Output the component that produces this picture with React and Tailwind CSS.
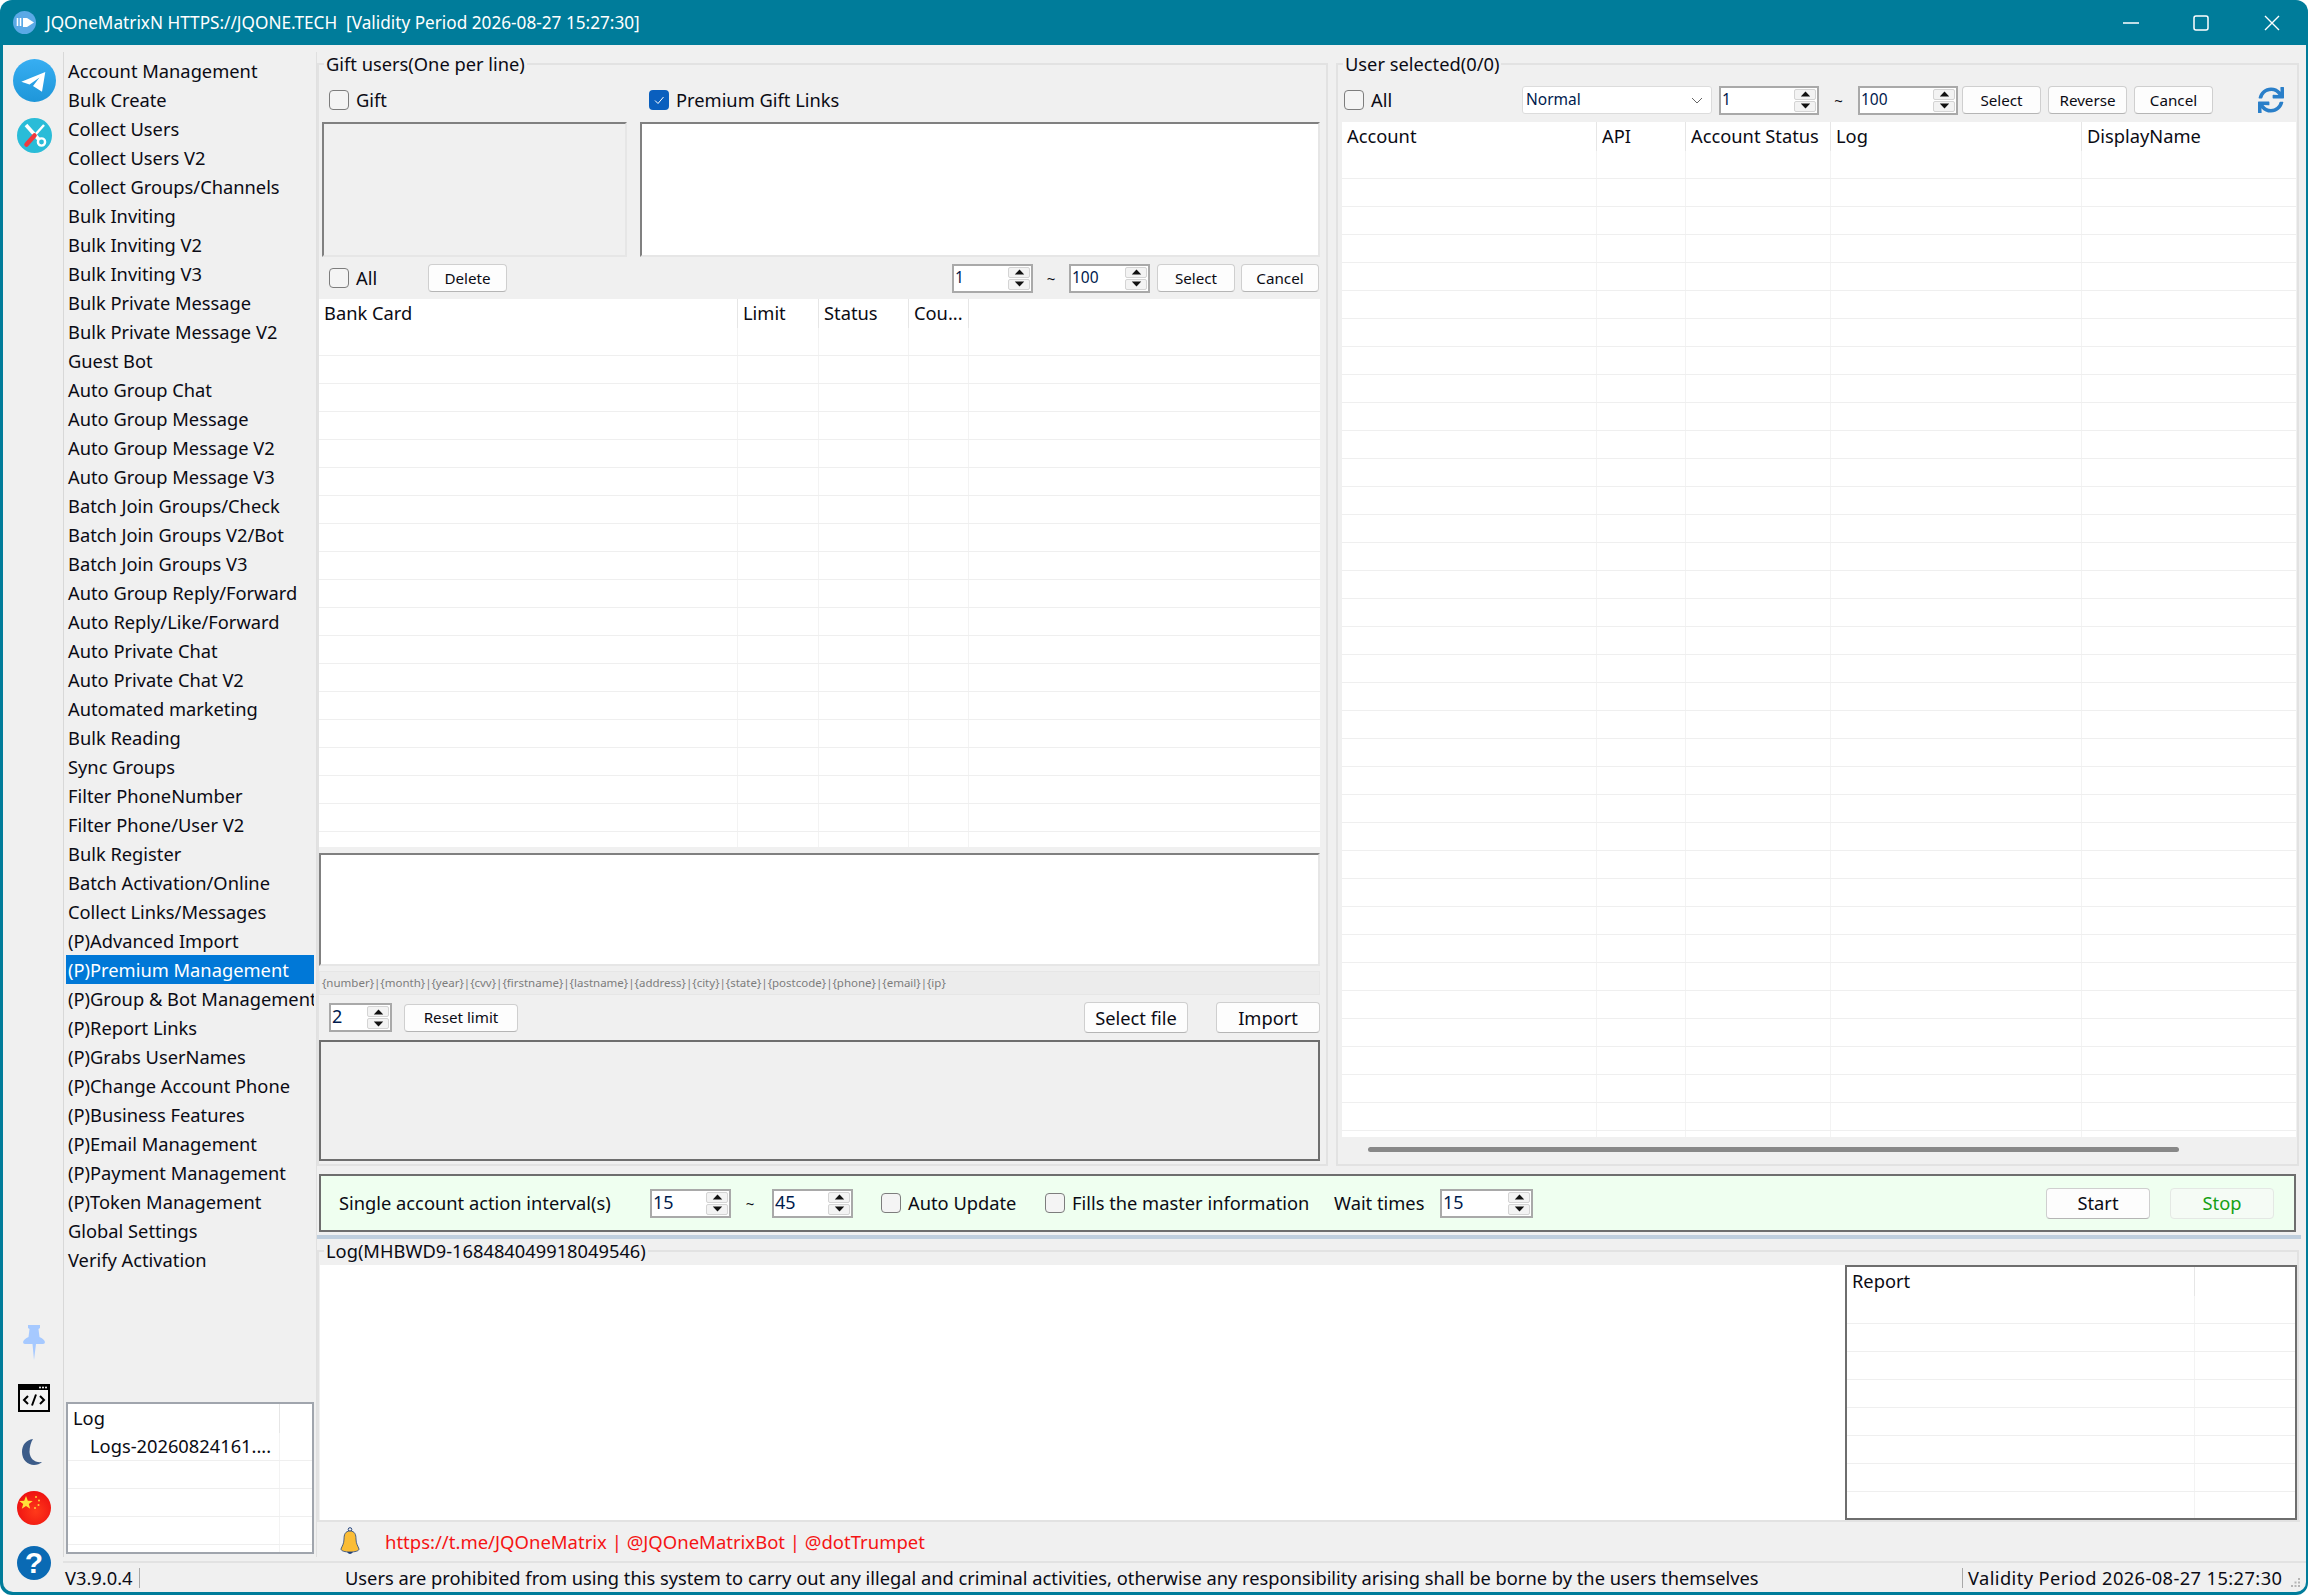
import React from "react";
import { FaSync } from "react-icons/fa";

const menu = ["Account Management","Bulk Create","Collect Users","Collect Users V2","Collect Groups/Channels","Bulk Inviting","Bulk Inviting V2","Bulk Inviting V3","Bulk Private Message","Bulk Private Message V2","Guest Bot","Auto Group Chat","Auto Group Message","Auto Group Message V2","Auto Group Message V3","Batch Join Groups/Check","Batch Join Groups V2/Bot","Batch Join Groups V3","Auto Group Reply/Forward","Auto Reply/Like/Forward","Auto Private Chat","Auto Private Chat V2","Automated marketing","Bulk Reading","Sync Groups","Filter PhoneNumber","Filter Phone/User V2","Bulk Register","Batch Activation/Online","Collect Links/Messages","(P)Advanced Import","(P)Premium Management","(P)Group & Bot Management","(P)Report Links","(P)Grabs UserNames","(P)Change Account Phone","(P)Business Features","(P)Email Management","(P)Payment Management","(P)Token Management","Global Settings","Verify Activation"];

function Check({ label, checked, className = "" }) {
  return (
    <div className={"flex items-center " + className}>
      {checked ? (
        <span className="w-[20px] h-[20px] rounded-[4px] bg-[#0a5fbe] flex items-center justify-center shrink-0">
          <svg width="12" height="12" viewBox="0 0 12 12"><path d="M2 6.5 L5 9.5 L10.5 3" fill="none" stroke="#fff" strokeWidth="1" /></svg>
        </span>
      ) : (
        <span className="w-[20px] h-[20px] rounded-[4px] border border-[#7d7d7d] bg-[#f4f4f4] shrink-0" />
      )}
      <span className="ml-[7px] whitespace-nowrap">{label}</span>
    </div>
  );
}

function Arrow({ up }) {
  return (
    <span className="flex-1 bg-[#f3f3f3] border border-[#d4d4d4] rounded-[2px] flex items-center justify-center">
      <svg width="11" height="6" viewBox="0 0 12 7"><path d={up ? "M6 0.5 L11.5 6.5 L0.5 6.5 Z" : "M6 6.5 L11.5 0.5 L0.5 0.5 Z"} fill="#111" /></svg>
    </span>
  );
}

function Spin({ value, className = "", text = "text-[15.5px]" }) {
  return (
    <div className={"h-[29px] bg-white border-2 border-[#a9a9a9] flex items-stretch " + className}>
      <span className={"flex-1 pl-[1px] leading-[22px] text-[#001a4d] " + text}>{value}</span>
      <span className="w-[22px] flex flex-col gap-[1px] py-[1px] mr-[1px]">
        <Arrow up />
        <Arrow />
      </span>
    </div>
  );
}

function Btn({ children, className = "", text = "text-[15.2px]", look = "bg-[#fdfdfd] border-[#cfcfcf] border-b-[#b5b5b5]" }) {
  return (
    <div className={"border rounded-[4px] flex items-center justify-center whitespace-nowrap " + look + " " + text + " " + className}>
      {children}
    </div>
  );
}

function Table({ cols, className = "", rows = 40 }) {
  return (
    <div className={"bg-white overflow-hidden " + className}>
      <div className="flex h-[29px]">
        {cols.map((c, i) => (
          <div key={i} className={c.w + " shrink-0 pl-[5px] leading-[28px] whitespace-nowrap overflow-hidden " + (c.last ? "" : "border-r border-[#e6e6e6]")}>{c.t}</div>
        ))}
      </div>
      {Array.from({ length: rows }).map((_, r) => (
        <div key={r} className="flex h-[28px] first:h-[27px] border-b border-[#efefef]">
          {cols.map((c, i) => (
            <div key={i} className={c.w + " shrink-0 " + (c.last ? "" : "border-r border-[#f3f3f3]")}>
              {r === 0 && c.cell ? <div className="pl-[22px] leading-[22px] mt-[2px] whitespace-nowrap">{c.cell}</div> : null}
            </div>
          ))}
        </div>
      ))}
    </div>
  );
}

function Group({ title, className = "", children }) {
  return (
    <div className={"relative border-2 border-[#e2e2e2] " + className}>
      <span className="absolute left-[5px] -top-[11px] bg-[#f0f0f0] px-[2px] leading-[20px] whitespace-nowrap">{title}</span>
      {children}
    </div>
  );
}

function TelegramIcon() {
  return (
    <svg width="43" height="43" viewBox="0 0 43 43" className="shrink-0">
      <defs><linearGradient id="tg" x1="0" y1="0" x2="0" y2="1"><stop offset="0" stopColor="#37aef2" /><stop offset="1" stopColor="#1e96d9" /></linearGradient></defs>
      <circle cx="21.5" cy="21.5" r="21.5" fill="url(#tg)" />
      <path d="M8.3 22.7 L32.3 13 L29 32.7 L20 27 L26.5 18.5 L16.5 25.5 Z" fill="#fff" />
    </svg>
  );
}

function ToolIcon() {
  return (
    <svg width="35" height="35" viewBox="0 0 35 35" className="shrink-0">
      <circle cx="17.5" cy="17.5" r="17.5" fill="#2abcd8" />
      <path d="M9 7 L25 25" stroke="#fff" strokeWidth="3.6" />
      <circle cx="24.5" cy="24" r="3.6" fill="#2abcd8" stroke="#fff" strokeWidth="2.4" />
      <path d="M27 7 L18 17" stroke="#fff" strokeWidth="2.4" />
      <path d="M17.5 17.5 L9.5 26.5" stroke="#ee3b40" strokeWidth="4.6" strokeLinecap="round" />
    </svg>
  );
}

function PinIcon() {
  return (
    <svg width="22" height="35" viewBox="0 0 22 35" className="shrink-0">
      <path d="M5 0 H17 V3 L15.5 4 L16.5 12 Q21 14 22 17 Q22 19 20 19 H13 L11 35 L9.5 19 H2 Q0 19 0 17 Q1 14 5.5 12 L6.5 4 L5 3 Z" fill="#a6c9ff" />
    </svg>
  );
}

function CodeIcon() {
  return (
    <svg width="32" height="28" viewBox="0 0 32 28" className="shrink-0">
      <rect x="1" y="1" width="30" height="26" fill="#f4f4f4" stroke="#000" strokeWidth="2" />
      <rect x="1" y="1" width="30" height="5" fill="#000" />
      <circle cx="22" cy="3.5" r="1" fill="#fff" /><circle cx="25" cy="3.5" r="1" fill="#fff" /><circle cx="28" cy="3.5" r="1" fill="#fff" />
      <path d="M10 12 L6 16 L10 20 M22 12 L26 16 L22 20 M18 10.5 L14 21.5" fill="none" stroke="#000" strokeWidth="2" />
    </svg>
  );
}

function MoonIcon() {
  return (
    <svg width="20" height="26" viewBox="0 0 20 26" className="shrink-0">
      <path d="M11 0 C4 1 0 6 0 13 C0 21 6 26 12 26 C15 26 18 25 20 23 C13 24 8 20 7.5 13 C7.5 8 9 3 11 0 Z" fill="#3c5c89" />
    </svg>
  );
}

function FlagIcon() {
  return (
    <svg width="34" height="34" viewBox="0 0 34 34" className="shrink-0">
      <defs><radialGradient id="fl" cx="0.55" cy="0.6" r="0.6"><stop offset="0" stopColor="#ff3a1a" /><stop offset="1" stopColor="#ee1111" /></radialGradient></defs>
      <circle cx="17" cy="17" r="17" fill="url(#fl)" />
      <polygon points="9,5 10.8,9.8 15.8,10 11.8,13 13.2,17.8 9,15 4.8,17.8 6.2,13 2.2,10 7.2,9.8" fill="#ffe13a" />
      <circle cx="19" cy="6" r="1" fill="#ffd23a" /><circle cx="22" cy="9.5" r="1" fill="#ffd23a" /><circle cx="21.5" cy="14" r="1" fill="#ffd23a" /><circle cx="18" cy="17" r="1" fill="#ffd23a" />
    </svg>
  );
}

function HelpIcon() {
  return (
    <div className="w-[34px] h-[34px] rounded-full bg-[#0a6ab4] flex items-center justify-center text-white font-bold text-[30px] leading-none shrink-0 font-['Liberation_Sans',sans-serif]">?</div>
  );
}

function BellIcon() {
  return (
    <svg width="20" height="29" viewBox="0 0 20 29" className="shrink-0">
      <circle cx="10" cy="2.5" r="1.8" fill="none" stroke="#20407a" strokeWidth="1" />
      <path d="M10 4 C5 4 4 8 4 12 C4 17 2 19 1 22 C1 24 5 25 10 25 C15 25 19 24 19 22 C18 19 16 17 16 12 C16 8 15 4 10 4 Z" fill="#fbbd36" stroke="#20407a" strokeWidth="0.8" />
      <path d="M7 25 Q10 29 13 25 Z" fill="#20407a" />
    </svg>
  );
}

function AppIcon() {
  return (
    <svg width="23" height="23" viewBox="0 0 23 23" className="shrink-0">
      <circle cx="11.5" cy="11.5" r="11.5" fill="#5aa9e6" />
      <path d="M10 7 H14 L21 11.5 L14 16 H10 Z" fill="#fff" />
      <path d="M4.5 7 V15 M7.5 7 V15" stroke="#fff" strokeWidth="1.6" />
    </svg>
  );
}

function WinBtns() {
  return (
    <div className="flex items-center">
      <svg width="16" height="16" viewBox="0 0 16 16" className="mr-[54px]"><path d="M0 8 H16" stroke="#fff" strokeWidth="1.5" /></svg>
      <svg width="16" height="16" viewBox="0 0 16 16" className="mr-[55px]"><rect x="1" y="1" width="14" height="14" rx="2" fill="none" stroke="#fff" strokeWidth="1.5" /></svg>
      <svg width="16" height="16" viewBox="0 0 16 16" className="mr-[28px]"><path d="M1 1 L15 15 M15 1 L1 15" stroke="#fff" strokeWidth="1.4" /></svg>
    </div>
  );
}

function Grip() {
  return (
    <svg width="10" height="10" viewBox="0 0 10 10" className="ml-auto mr-[5px] mt-[10px]">
      <rect x="7" y="7" width="2" height="2" fill="#b5b5b5" /><rect x="3.5" y="7" width="2" height="2" fill="#b5b5b5" /><rect x="0" y="7" width="2" height="2" fill="#b5b5b5" />
      <rect x="7" y="3.5" width="2" height="2" fill="#b5b5b5" /><rect x="3.5" y="3.5" width="2" height="2" fill="#b5b5b5" /><rect x="7" y="0" width="2" height="2" fill="#b5b5b5" />
    </svg>
  );
}

export default function App() {
  return (
    <div className="w-[2308px] h-[1595px] bg-white overflow-hidden font-['Noto_Sans',sans-serif] text-[18.3px] text-[#0b0b14]">
      <div className="w-full h-full bg-[#007c9a] rounded-[12px] flex flex-col overflow-hidden">
        {/* Title bar */}
        <div className="h-[45px] shrink-0 flex items-center pl-[13px] justify-between">
          <div className="flex items-center">
            <AppIcon />
            <span className="ml-[10px] text-white text-[17.2px] whitespace-pre">JQOneMatrixN HTTPS://JQONE.TECH  [Validity Period 2026-08-27 15:27:30]</span>
          </div>
          <WinBtns />
        </div>

        {/* Window body */}
        <div className="flex-1 min-h-0 ml-[3px] mr-[2px] mb-[3px] bg-[#f0f0f0] rounded-b-[10px] flex overflow-hidden">
          {/* Icons column */}
          <div className="w-[60px] shrink-0 flex flex-col items-center">
            <div className="mt-[14px] ml-[2px]"><TelegramIcon /></div>
            <div className="mt-[16px] ml-[2px]"><ToolIcon /></div>
            <div className="mt-auto ml-[2px]"><PinIcon /></div>
            <div className="mt-[24px] ml-[2px]"><CodeIcon /></div>
            <div className="mt-[27px] -ml-[2px]"><MoonIcon /></div>
            <div className="mt-[26px] ml-[2px]"><FlagIcon /></div>
            <div className="mt-[21px] mb-[12px] ml-[2px]"><HelpIcon /></div>
          </div>

          <div className="flex-1 min-w-0 flex flex-col">
            <div className="flex-1 min-h-0 flex">
              {/* Menu */}
              <div className="w-[254px] shrink-0 mt-[7px] mb-[4px] border-l border-r border-[#d8d8d8] border-r-[#e0e0e0] flex flex-col pt-[4px] pl-[2px] pr-[2px]">
                {menu.map((m) => (
                  <div key={m} className={"h-[29px] shrink-0 pl-[2px] leading-[29px] whitespace-nowrap overflow-hidden " + (m === "(P)Premium Management" ? "bg-[#0078d7] text-white" : "")}>{m}</div>
                ))}
                <div className="mt-auto mb-[3px] border-2 border-[#a0a5ad]">
                  <Table rows={5} className="h-[148px]" cols={[{ w: "w-[212px]", t: "Log", cell: "Logs-20260824161...." }, { w: "w-[30px]", t: "", last: true }]} />
                </div>
              </div>

              {/* Content */}
              <div className="flex-1 min-w-0 flex flex-col">
                <div className="flex mt-[18px] h-[1103px] shrink-0">
                  {/* Left group */}
                  <Group title="Gift users(One per line)" className="w-[1011px] shrink-0 flex flex-col">
                    <div className="flex h-[57px] shrink-0 pt-[23px] leading-[24px]">
                      <Check label="Gift" className="ml-[10px] w-[320px] h-[24px]" />
                      <Check label="Premium Gift Links" checked className="h-[24px]" />
                    </div>
                    <div className="flex h-[135px] shrink-0">
                      <div className="ml-[3px] w-[305px] border-2 border-[#808080] border-r-[#e6e6e6] border-b-[#e6e6e6]" />
                      <div className="ml-[13px] w-[680px] bg-white border-2 border-[#808080] border-r-[#e6e6e6] border-b-[#e6e6e6]" />
                    </div>
                    <div className="flex items-center h-[42px] shrink-0">
                      <Check label="All" className="ml-[10px] w-[99px]" />
                      <Btn className="w-[79px] h-[28px]">Delete</Btn>
                      <Spin value="1" className="w-[81px] ml-[445px]" />
                      <span className="w-[36px] text-center text-[15px]">~</span>
                      <Spin value="100" className="w-[81px]" />
                      <Btn className="w-[78px] h-[28px] ml-[7px]">Select</Btn>
                      <Btn className="w-[78px] h-[28px] ml-[6px]">Cancel</Btn>
                    </div>
                    <Table className="h-[548px] shrink-0 w-[1001px]" rows={20} cols={[{ w: "w-[419px]", t: "Bank Card" }, { w: "w-[81px]", t: "Limit" }, { w: "w-[90px]", t: "Status" }, { w: "w-[60px]", t: "Cou..." }, { w: "w-[351px]", t: "", last: true }]} />
                    <div className="mt-[6px] w-[1001px] h-[113px] shrink-0 bg-white border-2 border-[#808080] border-r-[#e6e6e6] border-b-[#e6e6e6]" />
                    <div className="mt-[5px] w-[1001px] h-[24px] shrink-0 bg-[#ececec] border border-[#e6e6e6] pl-[2px] text-[11.5px] leading-[22px] text-[#7c7c7c] whitespace-nowrap">{"{number}|{month}|{year}|{cvv}|{firstname}|{lastname}|{address}|{city}|{state}|{postcode}|{phone}|{email}|{ip}"}</div>
                    <div className="flex items-center h-[45px] shrink-0 w-[1001px]">
                      <Spin value="2" text="text-[18px]" className="w-[63px] ml-[10px]" />
                      <Btn className="w-[114px] h-[28px] ml-[12px]">Reset limit</Btn>
                      <Btn text="text-[18.3px]" className="w-[104px] h-[31px] ml-auto">Select file</Btn>
                      <Btn text="text-[18.3px]" className="w-[104px] h-[31px] ml-[28px]">Import</Btn>
                    </div>
                    <div className="w-[1001px] h-[121px] shrink-0 border-2 border-[#6e6e6e]" />
                  </Group>

                  {/* Right group */}
                  <Group title="User selected(0/0)" className="w-[963px] shrink-0 ml-[8px] flex flex-col px-[4px]">
                    <div className="flex items-center h-[57px] shrink-0 pt-[13px]">
                      <Check label="All" className="ml-[2px] w-[178px]" />
                      <div className="w-[190px] h-[28px] bg-white border border-[#dcdcdc] rounded-[3px] flex items-center justify-between pl-[3px] pr-[8px] text-[15.5px] text-[#001a4d]">
                        Normal
                        <svg width="12" height="7" viewBox="0 0 12 7"><path d="M1 1 L6 6 L11 1" fill="none" stroke="#666" strokeWidth="1" /></svg>
                      </div>
                      <Spin value="1" className="w-[100px] ml-[7px]" />
                      <span className="w-[39px] text-center text-[15px]">~</span>
                      <Spin value="100" className="w-[100px]" />
                      <Btn className="w-[79px] h-[28px] ml-[4px]">Select</Btn>
                      <Btn className="w-[79px] h-[28px] ml-[7px]">Reverse</Btn>
                      <Btn className="w-[79px] h-[28px] ml-[7px]">Cancel</Btn>
                      <FaSync className="ml-[45px] text-[#2a7fc9]" size={26} />
                    </div>
                    <Table className="h-[1015px] shrink-0 w-[954px]" rows={37} cols={[{ w: "w-[255px]", t: "Account" }, { w: "w-[89px]", t: "API" }, { w: "w-[145px]", t: "Account Status" }, { w: "w-[251px]", t: "Log" }, { w: "w-[214px]", t: "DisplayName", last: true }]} />
                    <div className="mt-[10px] ml-[26px] w-[811px] h-[5px] bg-[#888] rounded-full shrink-0" />
                  </Group>
                </div>

                {/* Action bar */}
                <div className="mt-[8px] ml-[2px] w-[1977px] h-[58px] shrink-0 bg-[#effff0] border-2 border-[#6e6e6e] flex items-center">
                  <span className="ml-[18px] w-[311px] whitespace-nowrap">Single account action interval(s)</span>
                  <Spin value="15" text="text-[18px]" className="w-[81px]" />
                  <span className="w-[41px] text-center text-[15px] pr-[3px]">~</span>
                  <Spin value="45" text="text-[18px]" className="w-[81px]" />
                  <Check label="Auto Update" className="ml-[28px] w-[164px]" />
                  <Check label="Fills the master information" className="w-[289px]" />
                  <span className="whitespace-nowrap w-[106px]">Wait times</span>
                  <Spin value="15" text="text-[18px]" className="w-[93px]" />
                  <Btn text="text-[18.3px]" className="w-[104px] h-[31px] ml-[513px]">Start</Btn>
                  <Btn text="text-[18.3px] text-[#14a014]" look="bg-[#f5fbf5] border-[#e4e8e4]" className="w-[104px] h-[31px] ml-[20px]">Stop</Btn>
                </div>

                {/* Splitter */}
                <div className="mt-[3px] h-[4px] w-[1984px] shrink-0 bg-[#bfcedd]" />

                {/* Log group */}
                <Group title="Log(MHBWD9-168484049918049546)" className="mt-[11px] w-[1982px] h-[270px] shrink-0 flex border-b-0 px-[1px]">
                  <div className="mt-[13px] w-[1525px] shrink-0 bg-white" />
                  <div className="mt-[13px] w-[452px] border-2 border-[#6e6e6e]">
                    <Table rows={9} className="h-full" cols={[{ w: "w-[348px]", t: "Report" }, { w: "w-[100px]", t: "", last: true }]} />
                  </div>
                </Group>

                {/* Links row */}
                <div className="flex-1 min-h-0 flex items-center border-t-2 border-[#e2e2e2] mr-[6px]">
                  <span className="ml-[23px]"><BellIcon /></span>
                  <span className="ml-[25px] text-[#f51414] text-[18.5px] whitespace-nowrap">https://t.me/JQOneMatrix | @JQOneMatrixBot | @dotTrumpet</span>
                </div>
              </div>
            </div>

            {/* Status bar */}
            <div className="h-[31px] shrink-0 border-t-2 border-[#e2e2e2] flex items-center">
              <span className="ml-[2px] w-[74px] whitespace-nowrap">V3.9.0.4</span>
              <span className="w-px h-[20px] bg-[#a8a8a8]" />
              <span className="ml-[205px] w-[1617px] whitespace-nowrap">Users are prohibited from using this system to carry out any illegal and criminal activities, otherwise any responsibility arising shall be borne by the users themselves</span>
              <span className="w-px h-[20px] bg-[#a8a8a8]" />
              <span className="ml-[5px] whitespace-nowrap tracking-[0.4px]">Validity Period 2026-08-27 15:27:30</span>
              <Grip />
            </div>
          </div>
        </div>
      </div>
    </div>
  );
}
